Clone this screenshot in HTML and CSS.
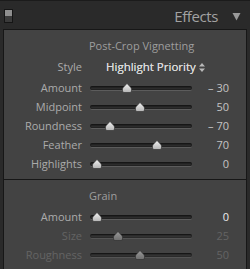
FILE: index.html
```html
<!DOCTYPE html>
<html>
<head>
<meta charset="utf-8">
<link rel="stylesheet" href="styles.css">
</head>
<body>
<div class="header">
  <span class="toggle"><span class="toggle-on"></span><span class="toggle-off"></span></span>
  <span class="header-title">Effects</span>
  <svg class="disclosure" width="9" height="9" viewBox="0 0 9 9"><path d="M0.5 1 L8.5 1 L4.5 8.5 Z" fill="#9a9a9a"/></svg>
</div>
<div class="panel">
  <section class="group first">
    <div class="row heading"><span></span><span class="group-title">Post-Crop Vignetting</span></div>
    <div class="row style-row">
      <span class="label">Style</span>
      <span class="select">Highlight Priority<svg class="updown" width="6" height="9" viewBox="0 0 6 9"><path d="M3 0 L6 3.6 L0 3.6 Z M0 5.4 L6 5.4 L3 9 Z" fill="#b8b8b8"/></svg></span>
    </div>
    <div class="row">
      <span class="label">Amount</span>
      <div class="slider"><span class="track"></span><svg class="thumb" style="left:32px" width="10" height="10" viewBox="0 0 10 10"><use href="#thumb"/></svg></div>
      <span class="value">– 30</span>
    </div>
    <div class="row">
      <span class="label">Midpoint</span>
      <div class="slider"><span class="track"></span><svg class="thumb" style="left:45px" width="10" height="10" viewBox="0 0 10 10"><use href="#thumb"/></svg></div>
      <span class="value">50</span>
    </div>
    <div class="row">
      <span class="label">Roundness</span>
      <div class="slider"><span class="track"></span><svg class="thumb" style="left:14.5px" width="10" height="10" viewBox="0 0 10 10"><use href="#thumb"/></svg></div>
      <span class="value">– 70</span>
    </div>
    <div class="row">
      <span class="label">Feather</span>
      <div class="slider"><span class="track"></span><svg class="thumb" style="left:62px" width="10" height="10" viewBox="0 0 10 10"><use href="#thumb"/></svg></div>
      <span class="value">70</span>
    </div>
    <div class="row">
      <span class="label">Highlights</span>
      <div class="slider"><span class="track"></span><svg class="thumb" style="left:1.5px" width="10" height="10" viewBox="0 0 10 10"><use href="#thumb"/></svg></div>
      <span class="value">0</span>
    </div>
  </section>
  <section class="group second">
    <div class="row heading"><span></span><span class="group-title">Grain</span></div>
    <div class="row">
      <span class="label">Amount</span>
      <div class="slider"><span class="track"></span><svg class="thumb" style="left:1.5px" width="10" height="10" viewBox="0 0 10 10"><use href="#thumb"/></svg></div>
      <span class="value active">0</span>
    </div>
    <div class="row dim">
      <span class="label">Size</span>
      <div class="slider"><span class="track"></span><svg class="thumb" style="left:23px" width="10" height="10" viewBox="0 0 10 10"><use href="#thumb-dim"/></svg></div>
      <span class="value">25</span>
    </div>
    <div class="row dim">
      <span class="label">Roughness</span>
      <div class="slider"><span class="track"></span><svg class="thumb" style="left:45px" width="10" height="10" viewBox="0 0 10 10"><use href="#thumb-dim"/></svg></div>
      <span class="value">50</span>
    </div>
  </section>
</div>
<svg class="defs" width="0" height="0">
  <defs>
    <linearGradient id="tg" x1="0" y1="0" x2="0" y2="1">
      <stop offset="0" stop-color="#f2f2f2"/>
      <stop offset="1" stop-color="#b4b4b4"/>
    </linearGradient>
    <linearGradient id="tgd" x1="0" y1="0" x2="0" y2="1">
      <stop offset="0" stop-color="#9a9a9a"/>
      <stop offset="1" stop-color="#6e6e6e"/>
    </linearGradient>
    <path id="thumb" d="M5 0.5 L8.6 4.3 Q9.5 5.2 9.5 6.3 L9.5 8 Q9.5 9.5 8 9.5 L2 9.5 Q0.5 9.5 0.5 8 L0.5 6.3 Q0.5 5.2 1.4 4.3 Z" fill="url(#tg)" stroke="#2a2a2a" stroke-width="0.6"/>
    <path id="thumb-dim" d="M5 0.5 L8.6 4.3 Q9.5 5.2 9.5 6.3 L9.5 8 Q9.5 9.5 8 9.5 L2 9.5 Q0.5 9.5 0.5 8 L0.5 6.3 Q0.5 5.2 1.4 4.3 Z" fill="url(#tgd)" stroke="#2a2a2a" stroke-width="0.6"/>
  </defs>
</svg>
</body>
</html>
```
FILE: styles.css
```css
html, body {
  margin: 0;
  padding: 0;
}
body {
  background: #2a2a2a;
  width: 250px;
  height: 269px;
  overflow: hidden;
  font-family: "Open Sans", "DejaVu Sans", sans-serif;
  font-size: 11px;
  color: #ababab;
}
.header {
  height: 29px;
  border-top: 1px solid #1b1b1b;
  display: flex;
  align-items: center;
  padding-left: 4px;
  box-sizing: border-box;
}
.toggle {
  width: 9px;
  height: 14px;
  border: 1px solid #151515;
  box-sizing: border-box;
  display: flex;
  flex-direction: column;
  margin-top: 2px;
}
.toggle-on {
  flex: 1;
  background: #8e8e8e;
}
.toggle-off {
  flex: 1;
  background: #3a3a3a;
}
.header-title {
  margin-left: auto;
  font-size: 15px;
  letter-spacing: -0.4px;
  color: #a2a2a2;
  margin-right: 14px;
  margin-top: 2px;
}
.disclosure {
  margin-right: 9px;
  margin-top: 2px;
}
.panel {
  margin-left: 3px;
  width: 244px;
  height: 240px;
  border: 1px solid #171717;
  border-bottom: none;
  background: #434343;
  box-sizing: border-box;
}
.group {
  display: grid;
  grid-template-columns: 78px 102px 29px;
  column-gap: 8px;
}
.group.first {
  padding-top: 6px;
  padding-bottom: 6px;
  border-bottom: 1px solid #171717;
}
.group.second {
  padding-top: 6px;
}
.row {
  display: contents;
}
.row > * {
  height: 19px;
  line-height: 19px;
}
.heading > *, .style-row > * {
  margin-bottom: 2px;
}
.label {
  text-align: right;
  white-space: nowrap;
}
.group-title {
  grid-column: 2 / 4;
  color: #9e9e9e;
  margin-left: -1px;
}
.select {
  grid-column: 2 / 4;
  margin-left: 16px;
  color: #dadada;
  font-size: 11.5px;
  display: flex;
  align-items: center;
  gap: 3px;
  text-shadow: 0 0 0.4px #dadada;
}
.updown {
  margin-top: 1px;
}
.slider {
  position: relative;
}
.track {
  position: absolute;
  left: 0;
  right: 0;
  top: 8px;
  height: 4px;
  border-radius: 3px;
  background: #2c2c2c;
  border-top: 1px solid #161616;
  box-sizing: border-box;
  box-shadow: 0 1px 0 #5c5c5c, inset 0 0 0 1px #222;
}
.thumb {
  position: absolute;
  top: 5px;
}
.value {
  text-align: right;
  color: #c4c4c4;
  white-space: nowrap;
}
.value.active {
  color: #ececec;
}
.dim .label, .dim .value {
  color: #636363;
}
.dim .track {
  background: #333;
  box-shadow: 0 1px 0 #545454, inset 0 0 0 1px #2a2a2a;
}
.defs {
  position: absolute;
}
```
